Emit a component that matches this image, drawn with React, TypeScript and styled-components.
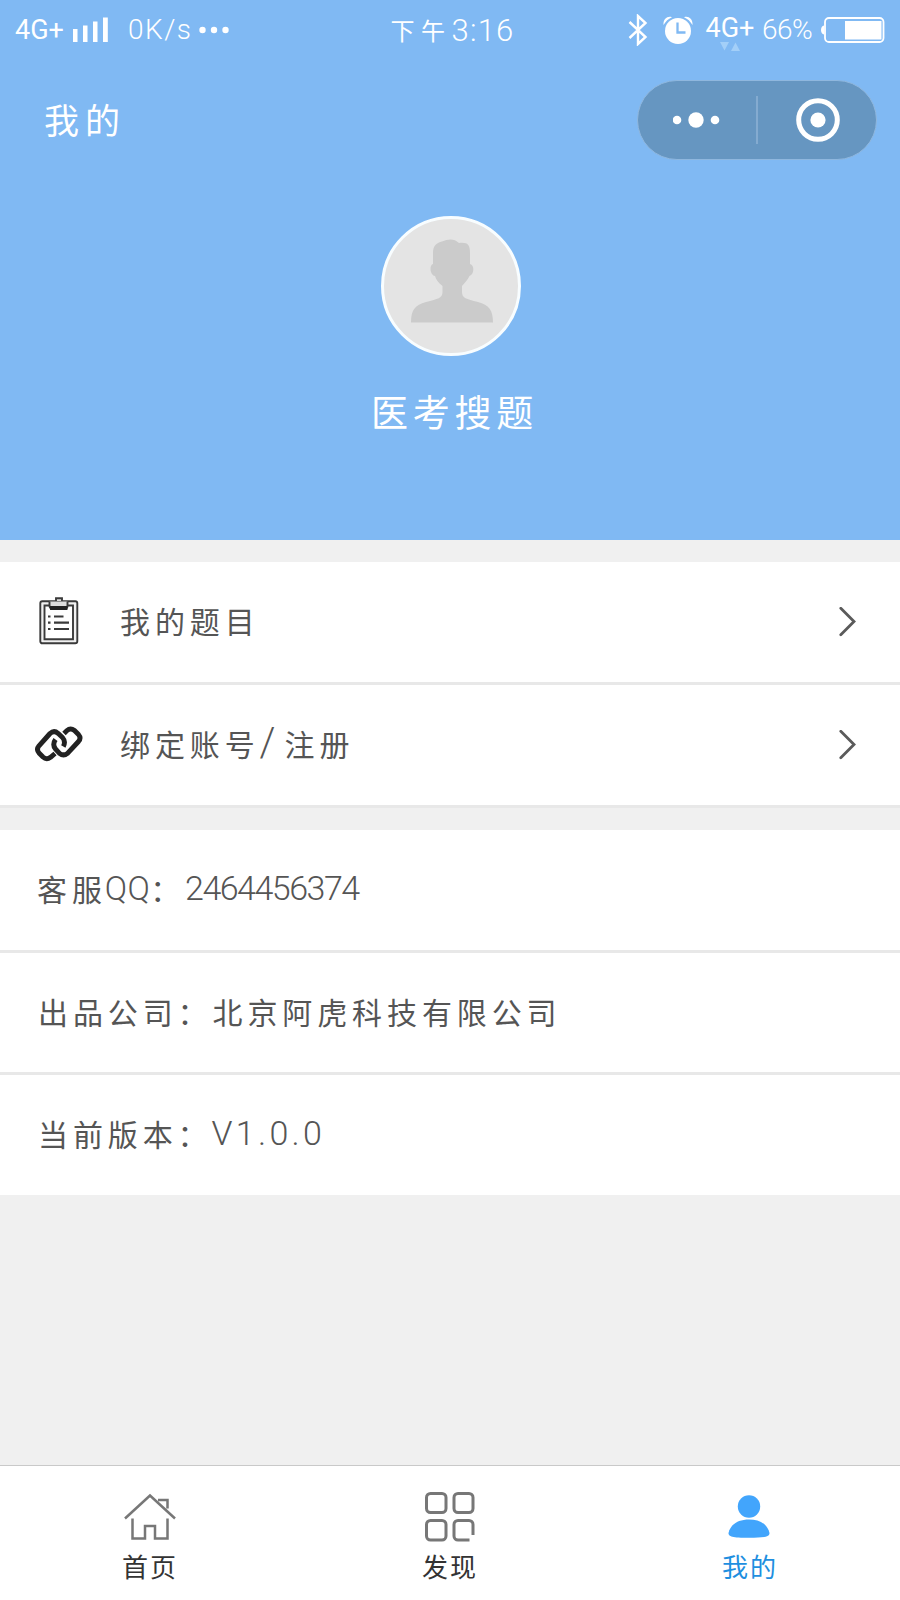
import React from "react";
import styled, { createGlobalStyle } from "styled-components";

const GlobalStyle = createGlobalStyle`
  * { box-sizing: border-box; }
  body { margin: 0; background: #f0f0f0; }
  svg { display: block; flex: none; }
`;

const Page = styled.div`
  width: 900px;
  height: 1600px;
  display: flex;
  flex-direction: column;
  background: #f0f0f0;
  font-family: "Noto Sans CJK SC", sans-serif;
  color: #555;
  line-height: 1;
  white-space: nowrap;
`;

const Hero = styled.header`
  height: 540px;
  background: #80b9f3;
  color: #fff;
  display: flex;
  flex-direction: column;
`;

const StatusBar = styled.div`
  height: 60px;
  padding: 0 15px;
  display: grid;
  grid-template-columns: 1fr auto 1fr;
  align-items: center;
`;

const StatusGroup = styled.div<{ $end?: boolean }>`
  display: flex;
  align-items: center;
  justify-content: ${(p) => (p.$end ? "flex-end" : "flex-start")};
`;

const Latin = styled.span<{ $size: number; $weight?: number; $track?: number; $ml?: number; $w?: number }>`
  font-family: Roboto, "Liberation Sans", sans-serif;
  font-size: ${(p) => p.$size}px;
  font-weight: ${(p) => p.$weight ?? 300};
  letter-spacing: ${(p) => p.$track ?? 0}px;
  margin-left: ${(p) => p.$ml ?? 0}px;
  ${(p) => (p.$w ? `width: ${p.$w}px;` : "")}
`;

const Clock = styled.div`
  display: flex;
  align-items: center;
  padding-left: 5px;
  font-size: 24px;
  letter-spacing: 6.5px;
`;

const Network = styled.div`
  display: flex;
  flex-direction: column;
  align-items: center;
  width: 50px;
  margin: 5px 7px 0 12px;
`;

const NavBar = styled.div`
  height: 120px;
  padding: 0 23px 0 44px;
  display: flex;
  justify-content: space-between;
  align-items: center;
`;

const Title = styled.h1`
  margin: 0 0 3px;
  font-size: 35px;
  font-weight: 400;
  letter-spacing: 6px;
`;

const Capsule = styled.div`
  width: 240px;
  height: 80px;
  border: 1.5px solid #8fb7de;
  border-radius: 40px;
  background: #6696c1;
  display: flex;
  align-items: center;
`;

const CapsuleButton = styled.div`
  flex: 1;
  display: flex;
  justify-content: center;
`;

const CapsuleDivider = styled.div`
  width: 1.5px;
  height: 48px;
  background: #84abd0;
`;

const Profile = styled.div`
  padding: 36px 0 0 2px;
  display: flex;
  flex-direction: column;
  align-items: center;
`;

const Avatar = styled.div`
  width: 140px;
  height: 140px;
  border: 3px solid #f8fdff;
  border-radius: 50%;
  overflow: hidden;
  background: #e4e4e4;
`;

const Name = styled.div`
  margin-top: 37px;
  font-size: 37px;
  letter-spacing: 4.8px;
  padding-left: 7px;
`;

const Group = styled.section`
  margin-top: 22px;
  background: #fff;
`;

const Row = styled.div<{ $line?: boolean; $h?: number; $pad?: number }>`
  height: ${(p) => p.$h ?? 123}px;
  padding: 0 44px 0 ${(p) => p.$pad ?? 35}px;
  border-bottom: ${(p) => (p.$line ? "3px solid #e8e8e8" : "0")};
  display: flex;
  align-items: center;
  font-size: 30px;
  letter-spacing: 4.9px;
`;

const RowIcon = styled.div`
  width: 48px;
  margin-right: 37px;
  padding-bottom: 3px;
  display: flex;
  justify-content: center;
`;

const RowText = styled.div`
  flex: 1;
  display: flex;
  align-items: center;
  padding-bottom: 4px;
`;

const Spacer = styled.div`
  flex: 1;
`;

const TabBar = styled.nav`
  height: 135px;
  border-top: 1.5px solid #c9c9c9;
  background: #fff;
  display: grid;
  grid-template-columns: repeat(3, 1fr);
`;

const Tab = styled.div<{ $active?: boolean }>`
  display: flex;
  flex-direction: column;
  align-items: center;
  padding-top: 25px;
  gap: 10px;
  font-size: 26px;
  letter-spacing: 2px;
  color: ${(p) => (p.$active ? "#1e8fe0" : "#333")};
`;

const Chevron = () => (
  <svg width="17" height="30" viewBox="0 0 17 30" fill="none" stroke="#5a5a5a" strokeWidth="2.800" strokeLinecap="round">
    <path d="M1.800 1.300 15 14.500 1.800 27.700" />
  </svg>
);

const SignalSvg = styled.svg`
  margin-left: 9px;
`;

const Signal = () => (
  <SignalSvg width="36" height="26" viewBox="0 0 36 26" fill="#fff">
    <path d="M0 12h4.500v13H0zM10 8.500h4.500V25H10zM20 4.500h4.500V25H20zM30 .5h4.800V25H30z" />
  </SignalSvg>
);

const EllipsisSvg = styled.svg`
  margin-left: 7px;
`;

const Ellipsis = () => (
  <EllipsisSvg width="31" height="8" viewBox="0 0 31 8" fill="#fff">
    <circle cx="3.500" cy="4" r="3.200" />
    <circle cx="15" cy="4" r="3.200" />
    <circle cx="26.500" cy="4" r="3.200" />
  </EllipsisSvg>
);

const Bluetooth = () => (
  <svg width="20" height="32" viewBox="0 0 20 32" fill="none" stroke="#fff" strokeWidth="2.400">
    <path d="M1.500 8 17.500 23 10 30V2L17.500 9 1.500 24" />
  </svg>
);

const AlarmSvg = styled.svg`
  margin-left: 15px;
`;

const Alarm = () => (
  <AlarmSvg width="30" height="29" viewBox="0 0 30 29">
    <path d="M.5 9C0 3 4.500-.5 9 1.200 5 3 3 5 .5 9ZM29.500 9C30 3 25.500-.5 21 1.200 25 3 27 5 29.500 9Z" fill="#fff" />
    <circle cx="15" cy="15" r="13" fill="#fff" />
    <path d="M14.500 6.500v10h8" fill="none" stroke="#80b9f3" strokeWidth="2.300" />
  </AlarmSvg>
);

const Traffic = () => (
  <svg width="20" height="9" viewBox="0 0 20 9" fill="#a3cff8">
    <path d="M0 0h9L4.500 8.500zM11 9h9L15.500.5z" />
  </svg>
);

const BatterySvg = styled.svg`
  margin-left: 6px;
`;

const Battery = () => (
  <BatterySvg width="65" height="26" viewBox="0 0 65 26">
    <path d="M4 8.500C0 9 0 17 4 17.500z" fill="#fff" />
    <rect x="5" y="1" width="58.500" height="24" rx="4" fill="none" stroke="#fff" strokeWidth="1.800" />
    <rect x="25" y="4" width="36.500" height="18.500" fill="#fff" />
  </BatterySvg>
);

const Silhouette = () => (
  <svg width="134" height="134" viewBox="0 0 134 134" fill="#cbcbcb">
    <path d="M27 103.500C27 91 31 86 42 83C54 80 58.500 79 58.500 73V67C54 64 52 60 51 57C46 56 45 46 49 45V34C49 26 53 24 58 22.500C64 20 70 19 75 24C84 23 86 26 86 34V45C91 46 90 56 85.500 57C84 60 81 64 78 67V73C78 79 82 80 94 83C105 86 109 91 109 103.500Z" />
  </svg>
);

const Clipboard = () => (
  <svg width="40" height="48" viewBox="0 0 40 48" fill="none" stroke="#3a3a3a" strokeWidth="1.900">
    <rect x="1.300" y="4.300" width="37" height="42" rx="2" fill="#f1f1f1" />
    <path d="M10 8.500H5.500v33.800h28.500V8.500H29" fill="#fff" />
    <path d="M10.500 4.500v4c0 2 1 3.500 3 3.500h12c2 0 3-1.500 3-3.500v-4M17 4V1.300h6V4" fill="#ddd" />
    <path d="M12 10h15.500v2H12z" fill="#222" stroke="#222" />
    <path d="M15 19.500h9.500M15 25.700h15M15 32h15M9 19.500h2.500M9 25.700h2.500M9 32h2.500" strokeWidth="2.200" />
  </svg>
);

const LinkIcon = () => (
  <svg width="48" height="36" viewBox="0 0 48 36" fill="none" stroke="#222" strokeWidth="4.900" strokeLinejoin="round">
    <path d="M20 27.500 15.500 31.300Q11.500 34.300 8 31L4 27Q1 23.500 4 19.800L15 7.500Q19 3.800 23 7.300L27.500 11.500Q31 15.500 28.300 20.500" />
    <path d="M29 7.500 32 4.500Q35.500 1.500 39.500 4.500L43.500 8.500Q46.500 12 43.500 15.500L32.500 27.300Q28.500 30.500 24.500 27.300L20.500 23Q17 18.500 20.500 13.500" />
  </svg>
);

const HomeIcon = () => (
  <svg width="52" height="52" viewBox="0 0 52 52" fill="none" stroke="#777" strokeWidth="2.500">
    <path d="M1 27.500 26 4.500l25 23M34 9h9.500v8.500M8.500 27.500v20H21V35h10V47.500h12.500V27.500" />
  </svg>
);

const DiscoverIcon = () => (
  <svg width="52" height="52" viewBox="0 0 52 52" fill="none" stroke="#777" strokeWidth="3">
    <rect x="2.500" y="2.500" width="19.500" height="19" rx="4" />
    <rect x="30" y="2.500" width="19" height="19" rx="4" />
    <rect x="2.500" y="29.500" width="19.500" height="19.500" rx="4" />
    <path d="M45.500 49H34a4 4 0 0 1-4-4V33.500a4 4 0 0 1 4-4h11a4 4 0 0 1 4 4V44" />
  </svg>
);

const MineIcon = () => (
  <svg width="52" height="52" viewBox="0 0 52 52" fill="#42a5fc">
    <circle cx="25" cy="15.500" r="11.200" />
    <path d="M4.500 42C6.500 33 14.500 28.500 25 28.500S43.500 33 45.500 42C45.500 45.500 42 46.800 25 46.800S4.500 45.500 4.500 42Z" />
  </svg>
);

export default function App() {
  return (
    <>
      <GlobalStyle />
      <Page>
        <Hero>
          <StatusBar>
            <StatusGroup>
              <Latin $size={27} $weight={400} $w={49} $track={0}>4G+</Latin>
              <Signal />
              <Latin $size={28} $ml={19} $track={1.5} $w={64}>0K/s</Latin>
              <Ellipsis />
            </StatusGroup>
            <Clock>
              下午<Latin $size={31} $track={1.2}>3:16</Latin>
            </Clock>
            <StatusGroup $end>
              <Bluetooth />
              <Alarm />
              <Network>
                <Latin $size={27} $weight={400}>4G+</Latin>
                <Traffic />
              </Network>
              <Latin $size={28} $track={-0.5} $w={52}>66%</Latin>
              <Battery />
            </StatusGroup>
          </StatusBar>
          <NavBar>
            <Title>我的</Title>
            <Capsule>
              <CapsuleButton>
                <svg width="48" height="16" viewBox="0 0 48 16" fill="#fff">
                  <circle cx="4" cy="8" r="4.300" />
                  <circle cx="23" cy="8" r="7.700" />
                  <circle cx="42" cy="8" r="4.300" />
                </svg>
              </CapsuleButton>
              <CapsuleDivider />
              <CapsuleButton>
                <svg width="46" height="44" viewBox="0 0 46 44">
                  <circle cx="24" cy="22" r="19.300" fill="none" stroke="#fff" strokeWidth="5" />
                  <circle cx="24" cy="22" r="7.600" fill="#fff" />
                </svg>
              </CapsuleButton>
            </Capsule>
          </NavBar>
          <Profile>
            <Avatar>
              <Silhouette />
            </Avatar>
            <Name>医考搜题</Name>
          </Profile>
        </Hero>

        <Group>
          <Row $line>
            <RowIcon><Clipboard /></RowIcon>
            <RowText>我的题目</RowText>
            <Chevron />
          </Row>
          <Row $line>
            <RowIcon><LinkIcon /></RowIcon>
            <RowText>
              绑定账号<Latin $size={40} $track={9}>/</Latin>注册
            </RowText>
            <Chevron />
          </Row>
        </Group>

        <Group>
          <Row $line $pad={37}>
            <RowText>
              客服<Latin $size={33} $ml={-2} $track={0.3}>QQ</Latin>：
              <Latin $size={34} $track={-1.5}>2464456374</Latin>
            </RowText>
          </Row>
          <Row $line $h={122} $pad={38}>
            <RowText>出品公司：北京阿虎科技有限公司</RowText>
          </Row>
          <Row $h={120} $pad={38}>
            <RowText>
              当前版本：<Latin $size={34} $ml={-1} $track={3.300}>V1.0.0</Latin>
            </RowText>
          </Row>
        </Group>

        <Spacer />
        <TabBar>
          <Tab><HomeIcon />首页</Tab>
          <Tab><DiscoverIcon />发现</Tab>
          <Tab $active><MineIcon />我的</Tab>
        </TabBar>
      </Page>
    </>
  );
}
